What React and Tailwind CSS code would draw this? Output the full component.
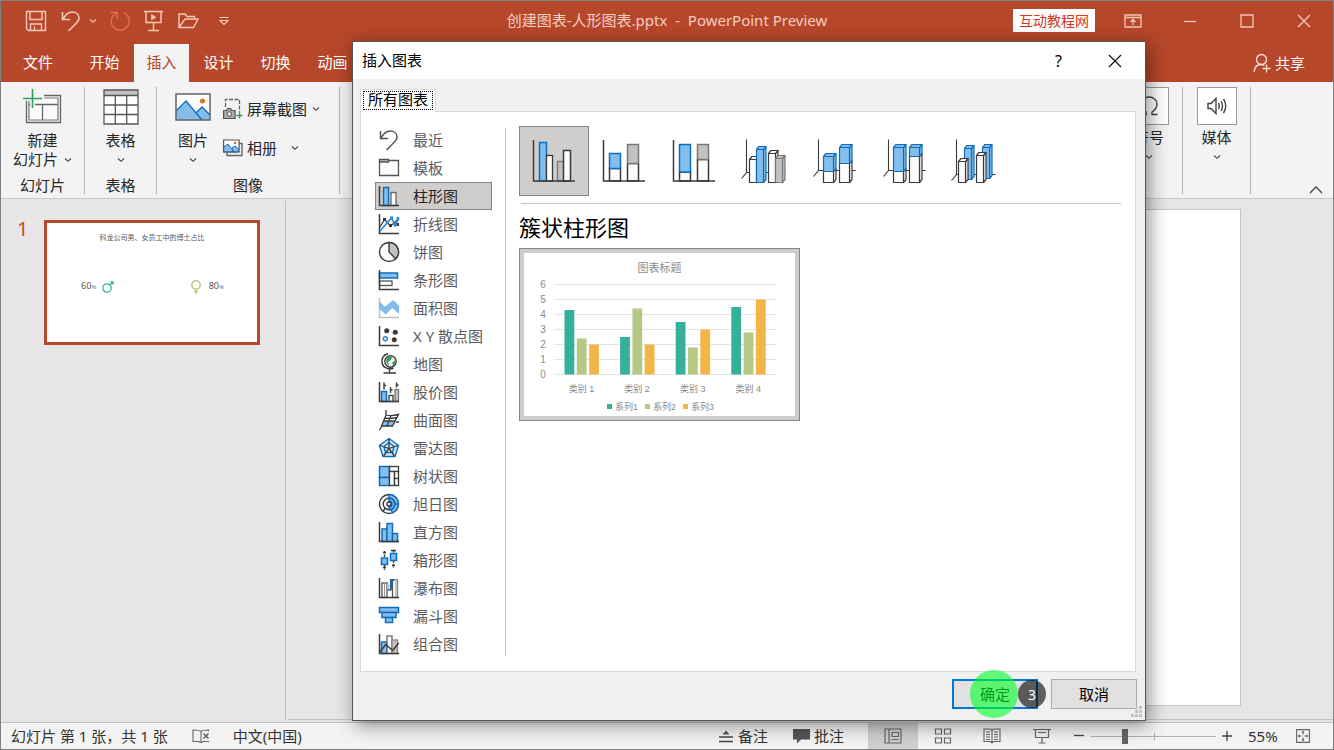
import React from 'react';

const K = '#3b3a39';
const B = '#0f6cbd';
const F = '#83beec';
const G = '#c2c2c2';
const W = '#fcfcfc';

function Svg({ w, h = w, children, ...rest }) {
  return (
    <svg width={w} height={h} viewBox={`0 0 ${w} ${h}`} fill="none" aria-hidden="true" className="shrink-0" {...rest}>
      {children}
    </svg>
  );
}

function Chevron({ color = '#444' }) {
  return (
    <Svg w={8} h={6} stroke={color} strokeWidth="1.1">
      <path d="M1 1.5 4 4.3 7 1.5" />
    </Svg>
  );
}

const Axis = ({ c = K }) => <path d="M1.5 1v19.5H21" stroke={c} strokeWidth="1.5" />;
const R = ({ x, y, w, h, f = W, s = K, sw = 1.3 }) => (
  <rect x={x} y={y} width={w} height={h} fill={f} stroke={s} strokeWidth={sw} />
);

const categories = [
  ['最近', <path d="M2.5 2v7.500H10M3 9C5.500 4.500 8.500 2 12 2c4.500 0 7 2.700 7 6 0 2.500-1.500 4-3.500 6L8.500 21" stroke="#555" strokeWidth="1.5" />],
  ['模板', <g stroke="#555" strokeWidth="1.300"><path d="M1.500 3.500h19v15h-19z" fill={W} /><path d="M1.500 5.500V2.500h9v2.500h-9" fill={G} /></g>],
  ['柱形图', <g><R x={5.5} y={2.5} w={5} h={18} f={F} s={B} sw={1.5} /><R x={13} y={7.5} w={5} h={13} s="#666" /><Axis /></g>],
  ['折线图', <g><Axis /><path d="M2 14 6.500 6.500 12.500 13 20 6.500" stroke={K} strokeWidth="1.200" /><path d="M2 18 13.500 5l3.500 7 4-7" stroke="#2b88d8" strokeWidth="1.600" /><path d="M5 5h3v3H5zM11 11h3v3h-3zM18.500 10h2.500v3h-2.500z" fill={K} /><path d="M12 3.500h3v3h-3zM15.500 10.500h3v3h-3zM18.500 4h2.500v3h-2.500z" fill="#2b88d8" /></g>],
  ['饼图', <g stroke={K} strokeWidth="1.400"><circle cx="11" cy="11" r="9.500" fill={W} /><path d="M11 11V1.500A9.500 9.500 0 0 1 17.700 17.700Z" fill={G} /></g>],
  ['条形图', <g><R x={1.5} y={4} w={18} h={5} f={F} s={B} sw={1.5} /><R x={1.5} y={12} w={12.5} h={4.5} s="#555" /><Axis /></g>],
  ['面积图', <g><Axis c="#c2c2c2" /><path d="M2 5.700 7 10.300 15.300 3.500 20.500 9v7L14.300 10.300 7.700 17 2 12z" fill={F} stroke="#6aabe0" strokeWidth=".8" /></g>],
  ['X Y 散点图', <g><Axis /><g fill={K}><circle cx="8.700" cy="5.700" r="2.500" /><circle cx="17.300" cy="7.300" r="2.500" /><circle cx="16.300" cy="14.700" r="2.500" /></g><circle cx="7.300" cy="13.700" r="2" stroke="#2b88d8" strokeWidth="1.500" /></g>],
  ['地图', <g stroke={K} strokeWidth="1.400"><circle cx="12.500" cy="8.500" r="5.700" fill={W} /><path d="M9 5c2-2 4-1.500 5-1l-1 3-3 2 1 3.500C8.500 11.500 7.500 8 9 5zM14.500 9l3-2c.5 3-.5 5-3 6z" fill="#2f9e58" stroke="none" /><path d="M10 .8C5 1.800 3 6 4.200 10.500c1.300 4.500 6.500 6.500 11.300 4.500M11.500 16v3.500M5.500 20h12.500" /></g>],
  ['股价图', <g><R x={3.5} y={10.5} w={5} h={10} f={F} s={B} sw={1.5} /><R x={11} y={14.5} w={4} h={6} /><R x={17} y={8.5} w={3.5} h={12} f={G} s="#777" /><path d="M6 1.500v7M6 4.500h2M12.500 6v6M12.500 9h2M18.500 1.500v5M18.500 4h2" stroke={K} strokeWidth="1.400" /><Axis /></g>],
  ['曲面图', <g stroke={K} strokeWidth="1.300"><path d="M8 6h12L14.500 17H3.500z" fill={W} stroke="none" /><path d="M5.500 12H17l-2.500 5h-11z" fill={F} stroke="none" /><path d="M8 1v5M4 17l-2.500 4M18 13h3M8 6q5 1.500 12.500-.5L14.500 17H3.500zM5.500 12H17M13 6.500 9 17M6.500 9q6 1 12.500-.5" /></g>],
  ['雷达图', <g strokeWidth="1.400"><path d="M11 1.500 20.500 8.500 17 19.500H5L1.500 8.500z" stroke={B} fill="#d4e9fa" /><path d="M11 5.500 16 9.500 14.500 15.500h-7L6 9.500z" stroke={B} /><path d="M11 2v9.500M20 8.500l-9 3 5.500 7.500M2 8.500l9 3L5.500 19" stroke={K} strokeWidth="1.300" /></g>],
  ['树状图', <g><R x={1.5} y={1.5} w={10} h={11} f={F} s={B} sw={1.5} /><R x={1.5} y={12.5} w={10} h={8} f={F} s={B} sw={1.5} /><R x={11.5} y={1.5} w={9} h={5} /><R x={11.5} y={6.5} w={5} h={14} /><R x={16.5} y={6.5} w={4} h={7} /><R x={16.5} y={13.5} w={4} h={7} /></g>],
  ['旭日图', <g strokeWidth="1.400"><circle cx="11" cy="11" r="9.500" fill={W} stroke={K} /><path d="M11 1.500a9.500 9.500 0 0 1 3.500 18.300L13 16.500A6 6 0 0 0 11 5z" fill={F} stroke={B} /><circle cx="11" cy="11" r="5.800" fill={W} stroke={K} /><path d="M11 5.200a5.800 5.800 0 0 1 0 11.600V14a3 3 0 0 0 0-6z" fill={F} stroke={B} /><circle cx="11" cy="11" r="2" stroke={K} /><path d="M5 18l2.500-3" stroke={K} /><path d="M17 11h3.500" stroke={B} /></g>],
  ['直方图', <g><R x={4} y={8} w={5} h={12.5} f={F} s={B} sw={1.5} /><R x={9} y={2.5} w={5.5} h={18} f={F} s={B} sw={1.5} /><R x={14.5} y={12.5} w={5} h={8} f={F} s={B} sw={1.5} /><Axis /></g>],
  ['箱形图', <g><path d="M6.500 2v19M15.500 1v18" stroke={K} strokeWidth="1.300" strokeDasharray="2.500 1" /><path d="M5 3.500h3M5 18.500h3M13 1.500h5M14 16.500h3" stroke={K} strokeWidth="1.300" /><R x={3.5} y={9} w={6} h={6.5} f={F} s={B} sw={1.5} /><R x={12.5} y={4.5} w={6} h={7} f={F} s={B} sw={1.5} /></g>],
  ['瀑布图', <g><R x={4} y={6} w={5} h={14.5} s="#555" /><path d="M6.500 6v14" stroke="#999" /><path d="M9 7h2.500v6H9z" fill={G} /><R x={14.5} y={3} w={5} h={17.5} s="#555" /><path d="M17 3v17h2.500V3z" fill={G} /><path d="M9 13h4.500" stroke="#555" strokeWidth="1.300" /><path d="M13 13V3h3" stroke={B} strokeWidth="2" /><Axis /></g>],
  ['漏斗图', <g><R x={1.5} y={2.5} w={19} h={5} f={F} s={B} sw={1.5} /><R x={4} y={7.5} w={14} h={5} f={F} s={B} sw={1.5} /><R x={7.5} y={12.5} w={7} h={5} f={F} s={B} sw={1.5} /></g>],
  ['组合图', <g><R x={3.5} y={9} w={5.5} h={11.5} f={F} s={B} sw={1.5} /><R x={9} y={3} w={5} h={17.5} s="#666" /><R x={14} y={7} w={5.5} h={13.5} f={G} s="#888" /><path d="M2 19 7.700 11.500l7 6 6-7.500" stroke={K} strokeWidth="1.500" /><Axis /></g>],
];

function Box3D({ x, y, w, b = 56.5, split, d = 2.5, top = W, s = K, low = W }) {
  const face = (y1, y2, f, st, lid) => (
    <g fill={f} stroke={st} strokeWidth="1.200" strokeLinejoin="round">
      <path d={`M${x + w} ${y1}l${d} -3V${y2 - 3}l${-d} 3z`} />
      {lid && <path d={`M${x} ${y1}l${d} -3h${w}l${-d} 3z`} />}
      <path d={`M${x} ${y1}h${w}V${y2}h${-w}z`} />
    </g>
  );
  return (
    <g>
      {split && face(split, b, low, K, false)}
      {face(y, split || b, top, s, true)}
    </g>
  );
}

const Axis3D = ({ x, y }) => (
  <path d={`M${x} 13.500V${y}l-5 6M${x} ${y}H56.500`} stroke={K} strokeWidth="1.100" />
);
const BigAxis = () => <path d="M14.500 14v41H56" stroke={K} strokeWidth="1.500" />;

const chartTypes = [
  ['簇状柱形图', <g><R x={20.5} y={16.5} w={7} h={38.5} f={F} s={B} sw={1.5} /><R x={27.5} y={29.5} w={6} h={25.5} /><R x={38.5} y={35.5} w={6} h={19.5} f={G} s="#777" /><R x={44.5} y={24.5} w={7} h={30.5} sw={1.5} /><BigAxis /></g>],
  ['堆积柱形图', <g><R x={20.5} y={42.5} w={11} h={12.5} sw={1.5} /><R x={20.5} y={27.5} w={11} h={15} f={F} s={B} sw={1.5} /><R x={38.5} y={37.5} w={11} h={17.5} sw={1.5} /><R x={38.5} y={18.5} w={11} h={19} f={G} s="#777" sw={1.5} /><BigAxis /></g>],
  ['百分比堆积柱形图', <g><R x={20.5} y={46} w={11} h={9} sw={1.5} /><R x={20.5} y={18.5} w={11} h={27.5} f={F} s={B} sw={1.5} /><R x={38.5} y={33.5} w={11} h={21.5} sw={1.5} /><R x={38.5} y={18.5} w={11} h={15} f={G} s="#777" sw={1.5} /><BigAxis /></g>],
  ['三维簇状柱形图', <g><Axis3D x={17.5} y={46.5} /><Box3D x={20.5} y={33.5} w={7} /><Box3D x={27.5} y={23.5} w={7} top={F} s={B} /><Box3D x={39.5} y={27.5} w={7} /><Box3D x={46.5} y={32.5} w={7} top={G} s="#777" /></g>],
  ['三维堆积柱形图', <g><Axis3D x={19.5} y={44.5} /><Box3D x={24.5} y={30.5} w={10} split={45.5} top={F} s={B} /><Box3D x={40.5} y={21.5} w={10} split={37.5} top={F} s={B} /></g>],
  ['三维百分比堆积柱形图', <g><Axis3D x={19.5} y={44.5} /><Box3D x={24.5} y={21.5} w={10} split={45.5} top={F} s={B} /><Box3D x={40.5} y={21.5} w={10} split={30.5} top={F} s={B} /></g>],
  ['三维柱形图', <g><Axis3D x={17.5} y={48.5} /><Box3D x={25.5} y={22.5} w={7} b={53.5} top={F} s={B} /><Box3D x={19.5} y={35.5} w={7} /><Box3D x={43.5} y={21.5} w={7} b={52.5} top={F} s={B} /><Box3D x={37.5} y={29.5} w={7} /></g>],
];

const series = [
  { name: '系列1', color: '#35b19b', data: [4.3, 2.5, 3.5, 4.5], lx: 83 },
  { name: '系列2', color: '#b5c985', data: [2.4, 4.4, 1.8, 2.8], lx: 121 },
  { name: '系列3', color: '#f4b548', data: [2, 2, 3, 5], lx: 159 },
];

function ChartPreview() {
  return (
    <svg width="271" height="163" viewBox="0 0 271 163" className="bg-white" fontFamily="'Liberation Sans','Noto Sans CJK SC',sans-serif" fill="#8a8a8a" role="img" aria-label="图表标题">
      <text x="135.500" y="19" fontSize="11" textAnchor="middle">图表标题</text>
      {[0, 1, 2, 3, 4, 5, 6].map((v) => (
        <g key={v}>
          <path d={`M30 ${121.500 - v * 15}h222`} stroke="#e4e4e4" />
          <text x="19" y={124.5 - v * 15} fontSize="10" textAnchor="middle">{v}</text>
        </g>
      ))}
      {series.map((s, i) =>
        s.data.map((v, j) => (
          <rect key={`${i}-${j}`} x={40.5 + j * 55.6 + i * 12.3} y={121.5 - v * 15} width="9.800" height={v * 15} fill={s.color} />
        ))
      )}
      {[1, 2, 3, 4].map((n) => (
        <text key={n} x={57.5 + (n - 1) * 55.6} y="139" fontSize="9" textAnchor="middle">{`类别 ${n}`}</text>
      ))}
      {series.map((s) => (
        <g key={s.name}>
          <rect x={s.lx} y="151" width="5" height="5" fill={s.color} />
          <text x={s.lx + 8} y="157" fontSize="9">{s.name}</text>
        </g>
      ))}
    </svg>
  );
}

function TitleBar() {
  const c = '#f6c9b9';
  return (
    <header className="grid h-[43px] grid-cols-[1fr_auto_1fr] items-center pb-1 text-[#f6cfc1]">
      <div className="flex items-center gap-3 pl-6">
        <button aria-label="保存"><Svg w={22} stroke={c} strokeWidth="1.400"><path d="M1.500 1.500h19v19h-17l-2-2zM5 1.500v8h12v-8M5.500 20v-6h11v6M9.500 20v-3.500" /></Svg></button>
        <button aria-label="撤消"><Svg w={22} stroke={c} strokeWidth="1.600"><path d="M3.500 2v7.500H11M4 9C6.500 4.500 9.500 2 13 2c4.500 0 7 2.700 7 6 0 2.500-1.500 4-3.500 6L9.500 21" /></Svg></button>
        <button aria-label="撤消选项" className="-ml-1"><Chevron color={c} /></button>
        <button aria-label="恢复"><Svg w={22} stroke="#e2694d" strokeWidth="1.600"><path d="M1 2.500h7v7M7.500 3A9 9 0 1 0 15 3" /></Svg></button>
        <button aria-label="从头开始"><Svg w={22} stroke={c} strokeWidth="1.400"><path d="M1 1.500h19M3 1.500v11h15v-11M10.500 13v7M5 20.500h11" /><path d="m8.500 4.500 4.500 2.700-4.500 2.700z" fill={c} strokeWidth=".6" /></Svg></button>
        <button aria-label="打开"><Svg w={22} stroke={c} strokeWidth="1.400"><path d="M2 17.500V4h6l2 2.500h7.500V9M2 17.500h14.500L21 9H8z" /></Svg></button>
        <button aria-label="自定义快速访问工具栏" className="ml-[7px]"><Svg w={12} h={10} stroke={c} strokeWidth="1.200"><path d="M1.500 1.500h9M2 4.500l4 4 4-4z" /></Svg></button>
      </div>
      <h1 className="text-[15px] whitespace-pre">创建图表-人形图表.pptx  -  PowerPoint Preview</h1>
      <div className="flex items-center justify-end pr-px">
        <a href="#site" className="mr-[9px] flex h-[23px] w-[82px] items-center justify-center bg-white text-[14px] text-[#d2381a]">互动教程网</a>
        <button aria-label="功能区显示选项" className="grid h-8 w-[57px] place-items-center"><Svg w={18} h={14} stroke={c} strokeWidth="1.300"><path d="M1 1h16v12H1zM1 3.500h16M9 11V5.500M6.500 8 9 5.500 11.500 8" /></Svg></button>
        <button aria-label="最小化" className="grid h-8 w-[57px] place-items-center"><Svg w={14} stroke={c} strokeWidth="1.300"><path d="M1 7.500h12" /></Svg></button>
        <button aria-label="最大化" className="grid h-8 w-[57px] place-items-center"><Svg w={14} stroke={c} strokeWidth="1.300"><path d="M1 1h12v12H1z" /></Svg></button>
        <button aria-label="关闭" className="grid h-8 w-[57px] place-items-center"><Svg w={14} stroke={c} strokeWidth="1.300"><path d="m1 1 12 12M13 1 1 13" /></Svg></button>
      </div>
    </header>
  );
}

function RibbonTabs() {
  return (
    <nav className="flex h-[38px] items-stretch pr-7 text-[15px] text-white">
      <button className="mr-0.5 w-[74px] pb-0.5">文件</button>
      <div className="flex gap-0.5">
        {['开始', '插入', '设计', '切换', '动画'].map((t) => (
          <button key={t} className={t === '插入' ? 'w-[55px] bg-[#f3f3f3] pb-0.5 text-[#b7472a]' : 'w-[55px] pb-0.5'}>{t}</button>
        ))}
      </div>
      <button className="ml-auto flex items-center gap-1">
        <Svg w={18} h={20} stroke="#fbe3da" strokeWidth="1.300"><circle cx="8.500" cy="6.500" r="5" /><path d="M1 19c.5-5 3.500-7.500 7-7.500 1.500 0 2.500.3 3.500 1M13.500 11.500v8M9.500 15.500h8" /></Svg>
        共享
      </button>
    </nav>
  );
}

function BigButton({ icon, label, children }) {
  return (
    <button className="flex flex-col items-center">
      <span className="grid h-10 place-items-center">{icon}</span>
      <span className="mt-1 leading-[19px]">{label}</span>
      <span className="flex h-[19px] items-center gap-1.5 leading-[19px]">{children}<Chevron /></span>
    </button>
  );
}

function Group({ label, className, children }) {
  return (
    <section className={`flex shrink-0 flex-col border-r border-[#b4b4b4] ${className}`}>
      <div className="flex flex-1 justify-center">{children}</div>
      {label && <h2 className="h-[18px] text-center leading-[18px]">{label}</h2>}
    </section>
  );
}

function SmallBox({ label, icon }) {
  return (
    <button className="flex flex-col items-center self-start">
      <span className="grid h-[38px] w-10 place-items-center border border-[#999] bg-white">{icon}</span>
      <span className="mt-[3px] leading-[19px]">{label}</span>
      <span className="flex h-[19px] items-center"><Chevron /></span>
    </button>
  );
}

function Ribbon() {
  return (
    <div className="flex h-[117px] items-stretch border-b border-[#c8c8c8] bg-[#f3f3f3] pt-[5px] pb-1 text-[15px] text-[#262626]">
      <Group label="幻灯片" className="w-[84px]">
        <BigButton label="新建" icon={
          <Svg w={40} h={38}><path d="M4.500 9.500V34.500h34v-27H22" stroke="#666" strokeWidth="1.300" /><path d="M7 13V32h29V10H22" fill={W} stroke="#777" strokeWidth="1.200" /><path d="M7 16.500h29M20.500 16.500V32" stroke="#666" strokeWidth="1.300" /><path d="M10.500 1v18M1 10.500h19" stroke="#f3f3f3" strokeWidth="5" /><path d="M10.500 1v19M1 10.500h19" stroke="#2fa25a" strokeWidth="1.600" /></Svg>
        }>幻灯片</BigButton>
      </Group>
      <Group label="表格" className="w-[72px]">
        <BigButton label="表格" icon={
          <Svg w={36}><path d="M1 1h34v34H1z" fill="#fff" /><path d="M1 1h34v5H1z" fill={G} /><path d="M1 1h34v34H1zM1 6.500h34M1 16h34M1 25.500h34M12.300 6.500V35M23.700 6.500V35" stroke="#555" strokeWidth="1.300" /></Svg>
        } />
      </Group>
      <Group label="图像" className="w-[183px]">
        <div className="flex w-full pl-[18px]">
          <BigButton label="图片" icon={
            <Svg w={36} h={28}><path d="M1 1h34v26H1z" fill="#fff" /><path d="M1 18 11 8l16 19H1z" fill={F} /><path d="m21 19 6-5 8 7v6h-8z" fill={F} /><path d="M1 18 11 8l16 19M21 20l6-6 8 8" stroke={B} strokeWidth="1.300" /><path d="M1 1h34v26H1z" stroke="#666" strokeWidth="1.500" /><circle cx="27.500" cy="8" r="2.500" fill="#e3701a" /></Svg>
          } />
          <div className="ml-3 flex flex-col gap-[17px] pt-[11px]">
            <button className="flex h-[22px] items-center">
              <Svg w={20} h={22}><path d="M2.500 9V1.500h14v13" stroke="#666" strokeDasharray="4 1.500" strokeWidth="1.300" /><path d="M.6 12.500h3l1-2h3l1 2h3.500v8H.6z" fill="#ababab" stroke="#555" strokeWidth="1.200" /><circle cx="6.300" cy="16" r="2.200" fill="#fff" stroke="#444" /><path d="M16.500 14.500v6M13.500 17.500h6" stroke="#2fa25a" strokeWidth="1.500" /></Svg>
              <span className="mr-[5px] ml-1">屏幕截图</span><Chevron />
            </button>
            <button className="flex h-[22px] items-center">
              <Svg w={20} h={18}><path d="M4 13.500V16.500h15V4.500h-3" stroke="#666" strokeWidth="1.400" /><path d="M.6 1h15v12H.6z" fill="#fff" /><path d="M.6 8 5 5l6 8H.6zM9 9l3-2 3.500 3v3H10z" fill={F} stroke={B} /><path d="M.6 1h15.500v12H.6z" stroke="#555" strokeWidth="1.200" /><circle cx="12" cy="4" r="1.300" fill="#e3701a" /></Svg>
              <span className="mr-[14px] ml-1">相册</span><Chevron />
            </button>
          </div>
        </div>
      </Group>
      <div className="ml-auto flex">
        <Group className="w-[67px]">
          <SmallBox label="符号" icon={<Svg w={20} stroke="#444" strokeWidth="1.400"><path d="M1.500 18.500h5.500v-2.500C4 14 2 11.500 2 8c0-4 3.500-7 8-7s8 3 8 7c0 3.500-2 6-5 8v2.500h5.500" /></Svg>} />
        </Group>
        <Group className="w-[68px]">
          <SmallBox label="媒体" icon={<Svg w={20} stroke="#444" strokeWidth="1.400"><path d="M1 7.500h3l5-5v15l-5-5H1zM11.500 7q1.500 3 0 6M14 5q3 5 0 10M16.500 3q4.500 7 0 14" /></Svg>} />
        </Group>
        <button aria-label="折叠功能区" className="grid w-[82px] place-items-end pr-2.5"><Svg w={14} h={8} stroke="#444" strokeWidth="1.300"><path d="m1 7 6-6 6 6" /></Svg></button>
      </div>
    </div>
  );
}

function Workspace() {
  return (
    <main className="flex flex-1 bg-[#e6e6e6]">
      <aside className="mt-0.5 mb-0.5 flex w-[285px] shrink-0 items-start border-r border-[#bdbdbd] pt-[19px] pl-4">
        <span className="w-[27px] text-[20px] leading-[18px] text-[#d24726]">1</span>
        <div className="flex h-[125px] w-[216px] flex-col border-3 border-[#b7472a] bg-white text-[#555]">
          <p className="mt-2.5 text-center text-[7px] leading-[10px]">科龙公司男、女员工中的博士占比</p>
          <div className="mt-9 flex items-center justify-between pr-[33px] pl-[34px] text-[9px] leading-[14px]">
            <span className="flex items-center gap-1.5">
              <span>60<span className="text-[6px] text-[#4d8090]">%</span></span>
              <Svg w={12} stroke="#35b19b" strokeWidth="1.300"><circle cx="5" cy="7" r="4.200" /><path d="m8 4 3-3M8.500 1H11v2.500" /></Svg>
            </span>
            <span className="flex items-center gap-2">
              <Svg w={10} h={14} stroke="#b5c985" strokeWidth="1.400"><circle cx="5" cy="5" r="4.200" /><path d="M5 9.500V14M3 11.500h4" /></Svg>
              <span>80<span className="text-[6px] text-[#4d8090]">%</span></span>
            </span>
          </div>
        </div>
      </aside>
      <div className="mb-0.5 ml-0.5 flex flex-1 border-b border-[#c3c3c3] pt-2.5 pr-[92px] pb-[13px] pl-[92px]">
        <div className="flex-1 border border-[#c6c6c6] bg-white" />
      </div>
    </main>
  );
}

function StatusBar() {
  const c = '#666';
  return (
    <footer className="flex h-[27px] items-stretch border-t border-[#c3c3c3] bg-[#f3f3f3] text-[15px] text-[#333]">
      <div className="flex items-center pl-2.5">
        <span>幻灯片 第 1 张，共 1 张</span>
        <button aria-label="拼写检查" className="mr-[23px] ml-6"><Svg w={18} h={14} stroke={c} strokeWidth="1.100"><path d="M9 2.500Q7 1 1 1v11.500h6L9 14l2-1.500h6M9 2.500V13M9 2.500Q11 1 16.500 1v1.500" /><path d="m11.500 4.500 5 5M16.500 4.500l-5 5" strokeWidth="1.600" /></Svg></button>
        <button>中文(中国)</button>
      </div>
      <div className="ml-auto flex items-center">
        <button className="mr-6 flex items-center gap-[5px]"><Svg w={14} stroke="#444" strokeWidth="1.300"><path d="M0 8h14M0 12.500h14" /><path d="m3.500 5.500 3.500-4 3.500 4z" fill="#555" stroke="none" /></Svg>备注</button>
        <button className="mr-6 flex items-center gap-[3px]"><Svg w={19} h={16}><path d="M1 1h17v10.500H9L5 15.500v-4H1z" fill="#555" /></Svg>批注</button>
        <button aria-label="普通视图" className="grid w-[50px] place-items-center self-stretch bg-[#cfcfcf]"><Svg w={18} h={16} stroke={c} strokeWidth="1.200"><path d="M1 1h16v14H1zM5 1v14M8 4.500h6.500v4H8zM7.500 11.500h7" /></Svg></button>
        <button aria-label="幻灯片浏览" className="grid w-[49px] place-items-center"><Svg w={18} h={16} stroke={c} strokeWidth="1.200"><path d="M1.500 1h6v5h-6zM10.500 1h6v5h-6zM1.500 10h6v5h-6zM10.500 10h6v5h-6z" /></Svg></button>
        <button aria-label="阅读视图" className="grid w-[50px] place-items-center"><Svg w={18} h={16} stroke={c} strokeWidth="1.100"><path d="M9 2.500 7.500 1H1v12.500h6.500L9 15l1.500-1.500H17V1h-6.500L9 2.500V15M3 4h4M3 6.500h4M3 9h4M3 11.500h4M11 4h4M11 6.500h4M11 9h4M11 11.500h4" /></Svg></button>
        <button aria-label="幻灯片放映" className="grid w-[50px] place-items-center"><Svg w={18} h={16} stroke={c} strokeWidth="1.200"><path d="M0 1.500h18M2.500 1.500v8h13v-8M9 9.500v5M5.500 15h7M5 4.500h8" /></Svg></button>
        <button aria-label="缩小" className="grid w-6 place-items-center"><Svg w={12} stroke="#444" strokeWidth="1.300"><path d="M1 5.500h10" /></Svg></button>
        <span className="relative flex items-center">
          <input type="range" aria-label="显示比例" min="0" max="100" defaultValue="26" className="h-[15px] w-[125px] appearance-none bg-transparent [&::-webkit-slider-runnable-track]:h-px [&::-webkit-slider-runnable-track]:bg-[#b0b0b0] [&::-webkit-slider-thumb]:-mt-[7px] [&::-webkit-slider-thumb]:h-[15px] [&::-webkit-slider-thumb]:w-1.5 [&::-webkit-slider-thumb]:appearance-none [&::-webkit-slider-thumb]:bg-[#666]" />
          <span className="pointer-events-none absolute top-1 left-1/2 h-[7px] w-px bg-[#b0b0b0]" />
        </span>
        <button aria-label="放大" className="grid w-[22px] place-items-center"><Svg w={12} stroke="#444" strokeWidth="1.300"><path d="M1 6h10M6 1v10" /></Svg></button>
        <span className="w-[53px] pl-2.5">55%</span>
        <button aria-label="适应窗口" className="mr-[23px] ml-[5px]"><Svg w={14} stroke={c} strokeWidth="1.100"><path d="M.6.6h12.800v12.800H.6z" /><path d="M7 2v3.500M7 8.500V12M2 7h3.500M8.500 7H12M6 3.500l1-1.200 1 1.200M6 10.500l1 1.200 1-1.200M3.500 6 2.300 7l1.200 1M10.500 6l1.200 1-1.200 1" /></Svg></button>
      </div>
    </footer>
  );
}

function InsertChartDialog() {
  return (
    <div role="dialog" aria-labelledby="dialog-title" className="absolute top-10 left-[351px] w-[794px] border border-[#555] bg-[#f0f0f0] text-[15px] text-black shadow-[3px_4px_18px_rgba(0,0,0,0.45)]">
      <div className="flex h-[37px] items-center bg-white pr-[23px] pl-[9px]">
        <h2 id="dialog-title" className="flex-1">插入图表</h2>
        <button aria-label="帮助" className="mr-[46px] text-[16px]">?</button>
        <button aria-label="关闭对话框"><Svg w={14} stroke="#111" strokeWidth="1.200"><path d="m1 1 12 12M13 1 1 13" /></Svg></button>
      </div>
      <div className="pt-2.5 pr-[9px] pl-[7px]">
        <div role="tablist" className="flex h-[22px] items-start">
          <button role="tab" aria-selected="true" className="z-10 h-[23px] border border-b-0 border-[#d9d9d9] bg-white px-0.5 pb-0.5">
            <span className="block h-[19px] border border-dotted border-black px-1 leading-[15px]">所有图表</span>
          </button>
        </div>
        <div className="flex border border-[#d9d9d9] bg-white pt-[14px] pr-[14px] pb-[13px] pl-[14px]">
          <div role="listbox" aria-label="图表类型" className="mr-[13px] flex w-[117px] flex-col text-[#5c5c5c]">
            {categories.map(([name, icon]) => (
              <button key={name} role="option" aria-selected={name === '柱形图'}
                className={name === '柱形图'
                  ? 'flex h-7 items-center gap-[13px] border border-[#868686] bg-[#d0cecd] pl-0.5 text-[#262626]'
                  : 'flex h-7 items-center gap-[13px] border border-transparent pl-0.5'}>
                <Svg w={22}>{icon}</Svg>
                <span className="whitespace-nowrap">{name}</span>
              </button>
            ))}
          </div>
          <div className="my-0.5 mr-[13px] w-px bg-[#c6c6c6]" />
          <div className="flex flex-1 flex-col items-start">
            <div className="flex">
              {chartTypes.map(([name, icon], i) => (
                <button key={name} aria-label={name} className={i === 0 ? 'size-[70px] bg-[#d0cecd] outline -outline-offset-1 outline-[#868686]' : 'size-[70px]'}>
                  <Svg w={70}>{icon}</Svg>
                </button>
              ))}
            </div>
            <div className="mt-[7px] ml-0.5 h-px self-stretch bg-[#c6c6c6]" />
            <h3 className="mt-[7px] text-[22px] leading-8">簇状柱形图</h3>
            <button aria-label="簇状柱形图预览" className="mt-[5px] border border-[#868686] bg-[#d0cecd] p-1">
              <ChartPreview />
            </button>
          </div>
        </div>
      </div>
      <div className="relative flex h-12 items-start justify-end gap-[13px] pt-[7px] pr-2">
        <div className="relative">
          <button className="h-[30px] w-[86px] border-2 border-[#0078d7] bg-[#e1e1e1]">确定</button>
          <span className="pointer-events-none absolute -top-[9px] left-[18px] size-12 rounded-full bg-[#00ff28]/60" />
          <span className="pointer-events-none absolute top-px left-[66px] grid size-7 place-items-center rounded-full bg-black/60 text-[14px] text-white">3</span>
        </div>
        <button className="h-[30px] w-[86px] border border-[#adadad] bg-[#e1e1e1]">取消</button>
        <Svg w={12} className="absolute right-0.5 bottom-0.5" fill="#bfbfbf"><path d="M8 0h3v3H8zM4 4h3v3H4zM8 4h3v3H8zM0 8h3v3H0zM4 8h3v3H4zM8 8h3v3H8z" /></Svg>
      </div>
    </div>
  );
}

export default function App() {
  return (
    <div className="relative flex min-h-screen flex-col overflow-hidden border border-[#808080] bg-[#b7472a] font-['Noto_Sans','Noto_Sans_CJK_SC',sans-serif] [&_button]:cursor-pointer">
      <TitleBar />
      <RibbonTabs />
      <Ribbon />
      <Workspace />
      <StatusBar />
      <InsertChartDialog />
    </div>
  );
}
